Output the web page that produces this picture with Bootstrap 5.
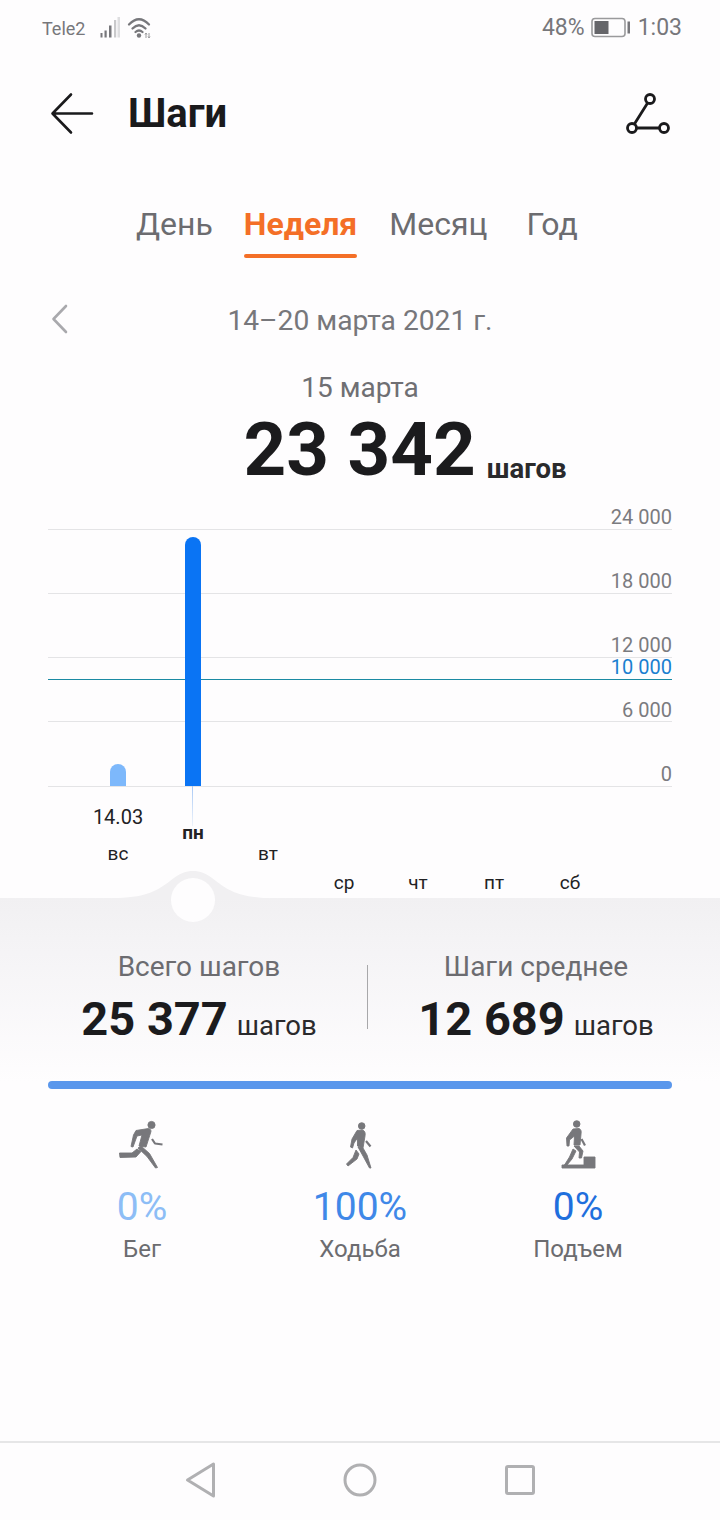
<!DOCTYPE html>
<html lang="ru">
<head>
<meta charset="utf-8">
<title>Шаги</title>
<link href="https://cdn.jsdelivr.net/npm/bootstrap@5.3.0/dist/css/bootstrap.min.css" rel="stylesheet">
<style>
html,body{margin:0;background:#fefdfe;}
body{font-family:Roboto,"Liberation Sans",sans-serif;color:#1c1c1e;}
.screen{width:720px;height:1520px;overflow:hidden;background:#fefdfe;}
.statusbar{height:56px;padding:0 38px 0 42px;color:#77777b;}
.carrier{font-size:18px;margin-right:4px;}
.batt-text{font-size:23px;}
.batt-icon{margin:0 8px 0 5px;}
.titlebar{height:116px;padding:0 48px 0 50px;}
.page-title{font-size:40px;font-weight:700;margin:0 0 0 34px;line-height:1;color:#1a1a1c;}
.tabbar{height:63px;margin-top:36px;padding-left:136px;font-size:32px;color:#6c6c70;}
.tab-item{position:relative;line-height:1;margin-right:31px;}
.tab-item-mid{margin-right:32px;}
.tab-item-wide{margin-right:39px;}
.tab-active{color:#f46f27;font-weight:700;}
.tab-active::after{content:"";position:absolute;left:0;right:0;bottom:-18px;height:4px;border-radius:2px;background:#f46f27;}
.date-row{height:100px;padding:0 48px;position:relative;font-size:28.2px;color:#77777b;}
.date-prev{position:absolute;left:51px;top:33px;}
.day-label{font-size:28px;color:#6f6f73;text-align:center;line-height:1;margin-top:3px;height:24px;}
.big-row{height:102px;padding:15px 0 0 90px;}
.big-num{font-size:74.500px;font-weight:700;line-height:1;color:#1b1b1d;}
.big-unit{font-size:27.500px;font-weight:700;line-height:1;margin:41.500px 0 0 11px;color:#2a2a2c;}
.chart{position:relative;height:398px;}
.gline{position:absolute;left:48px;width:624px;height:1px;background:#e4e4e6;}
.gline-goal{background:#1b8aa3;}
.ylab{position:absolute;right:48px;font-size:20px;line-height:1;color:#7b7b7f;}
.ylab-goal{color:#1a7fd0;}
.bar-col{position:absolute;width:16px;border-radius:8px 8px 0 0;}
.bar-main{left:185px;top:37px;height:249px;background:#0a74f4;}
.bar-off{left:110px;top:264px;height:22px;background:#7db8fb;}
.pointer{position:absolute;left:192px;top:286px;width:1px;height:40px;background:linear-gradient(#a9c9f5,#eef3fb);}
.xlab{position:absolute;font-size:19px;line-height:1;transform:translateX(-50%);color:#222224;}
.xlab-cur{font-weight:700;}
.xdate{font-size:20px;}
.panel{position:relative;height:543px;background:linear-gradient(#f1f0f2 0,#f4f3f5 40px,#fefdfe 185px);}
.wave{position:absolute;left:118px;top:-28px;width:150px;height:29px;}
.knob{position:absolute;left:171px;top:-20px;width:44px;height:44px;border-radius:50%;background:#fefdfe;}
.totals{padding:50px 16px 0 31px;height:183px;}
.total-cell{flex:1 1 0;text-align:center;}
.total-label{font-size:28px;line-height:38px;color:#6c6c70;}
.total-val{font-size:47px;font-weight:700;line-height:56px;margin-top:5px;color:#1b1b1d;}
.total-unit{font-size:27.500px;font-weight:400;margin-left:9px;color:#2a2a2c;}
.vsep{width:1px;height:64px;margin-top:17px;background:#a8a8aa;flex:none;}
.mixbar{height:8px;margin:0 48px;border-radius:4px;background:#5a97ec;}
.mix{padding:0 33px;margin-top:26px;}
.mix-cell{flex:1 1 0;text-align:center;}
.mix-icon{display:block;margin:0 auto;stroke:#77777b;stroke-width:.9;stroke-linejoin:round;}
.mix-pct{font-size:39px;line-height:44px;margin-top:10px;}
.mix-lab{font-size:24px;line-height:30px;color:#6c6c70;margin-top:5px;}
.c1{color:#8dbdf6;}.c2{color:#3f88e8;}.c3{color:#1f6fdd;}
.sysnav{height:79px;padding-bottom:4px;border-top:2px solid #e6e6e7;background:#fefdfe;gap:120px;}
</style>
</head>
<body>
<div class="screen">
  <div class="statusbar d-flex align-items-center justify-content-between">
    <div class="d-flex align-items-center">
      <span class="carrier">Tele2</span>
      <svg width="70" height="35" viewBox="0 0 70 35" aria-hidden="true">
        <g fill="#77777b"><rect x="11.500" y="22" width="2" height="4.500"/><rect x="15.500" y="19.500" width="2.200" height="7"/><rect x="20" y="14.500" width="2.500" height="12"/></g>
        <rect x="25" y="9" width="2.200" height="17.500" fill="#c9c9cb"/><rect x="28.500" y="6" width="2.500" height="20.500" fill="#dedee0"/>
        <g fill="none" stroke="#77777b" stroke-width="2.300" stroke-linecap="round"><path d="M40 13.500Q50 3 60 13.500"/><path d="M43.500 17.500Q50 11 56.500 17.500"/><path d="M46.500 21Q50 18 53.500 21"/></g>
        <circle cx="50" cy="24.500" r="2.200" fill="#77777b"/>
        <path d="M57 22v5M56 23.500l1-1.500 1 1.500M60 22v5M59 25.500l1 1.500 1-1.500" fill="none" stroke="#9a9a9c" stroke-width="1"/>
      </svg>
    </div>
    <div class="d-flex align-items-center batt-text">
      <span>48%</span>
      <svg class="batt-icon" width="40" height="22" viewBox="0 0 40 22" aria-hidden="true">
        <rect x="2" y="1.500" width="33" height="18" rx="3" fill="#fefdfe" stroke="#9a9a9c" stroke-width="1.600"/>
        <rect x="4.500" y="4" width="14" height="13" fill="#66666a"/>
        <rect x="37.500" y="4.500" width="2.500" height="12" fill="#77777b"/>
      </svg>
      <span>1:03</span>
    </div>
  </div>

  <div class="titlebar d-flex align-items-center">
    <svg width="44" height="44" viewBox="0 0 44 44" fill="none" stroke="#1a1a1c" stroke-width="2.600" stroke-linecap="round" stroke-linejoin="round" aria-hidden="true"><path d="M21 2.500 2.500 21.500 21 40.500M3 21.500h39"/></svg>
    <h1 class="page-title">Шаги</h1>
    <svg class="ms-auto" width="46" height="44" viewBox="0 0 46 44" fill="none" stroke="#1a1a1c" stroke-width="2.800" aria-hidden="true"><circle cx="24" cy="7" r="4.500"/><circle cx="6" cy="36" r="4.500"/><circle cx="38" cy="36" r="4.500"/><path d="M21.600 11 8.400 32M10.500 36h23"/></svg>
  </div>

  <div class="tabbar d-flex align-items-start">
    <span class="tab-item">День</span>
    <span class="tab-item tab-item-mid tab-active">Неделя</span>
    <span class="tab-item tab-item-wide">Месяц</span>
    <span class="tab-item">Год</span>
  </div>

  <div class="date-row d-flex align-items-center justify-content-center">
    <svg class="date-prev" width="20" height="30" viewBox="0 0 20 30" fill="none" stroke="#a9a9ad" stroke-width="2.600" stroke-linecap="round" stroke-linejoin="round" aria-hidden="true"><path d="M15 2 2.500 15 15 28"/></svg>
    <span>14–20 марта 2021 г.</span>
  </div>

  <div class="day-label">15 марта</div>
  <div class="big-row d-flex justify-content-center align-items-start">
    <span class="big-num">23 342</span><span class="big-unit">шагов</span>
  </div>

  <div class="chart">
    <div class="gline" style="top:29px"></div>
    <div class="gline" style="top:93px"></div>
    <div class="gline" style="top:157px"></div>
    <div class="gline gline-goal" style="top:179px"></div>
    <div class="gline" style="top:221px"></div>
    <div class="gline" style="top:286px"></div>
    <span class="ylab" style="top:7px">24 000</span>
    <span class="ylab" style="top:71px">18 000</span>
    <span class="ylab" style="top:135px">12 000</span>
    <span class="ylab ylab-goal" style="top:157px">10 000</span>
    <span class="ylab" style="top:200px">6 000</span>
    <span class="ylab" style="top:264px">0</span>
    <div class="bar-col bar-off"></div>
    <div class="bar-col bar-main"></div>
    <div class="pointer"></div>
    <span class="xlab xdate" style="left:118px;top:307px">14.03</span>
    <span class="xlab xlab-cur" style="left:193px;top:323px">пн</span>
    <span class="xlab" style="left:118px;top:344px">вс</span>
    <span class="xlab" style="left:268px;top:344px">вт</span>
    <span class="xlab" style="left:344px;top:373px">ср</span>
    <span class="xlab" style="left:418px;top:373px">чт</span>
    <span class="xlab" style="left:494px;top:373px">пт</span>
    <span class="xlab" style="left:570px;top:373px">сб</span>
  </div>

  <div class="panel">
    <svg class="wave" viewBox="0 0 150 29" aria-hidden="true"><path d="M0 28C30 27 40 20 52 11 62 3 68 1 75 1S88 3 98 11C110 20 120 27 150 28V29H0Z" fill="#f1f0f2"/></svg>
    <div class="knob"></div>
    <div class="totals d-flex align-items-start">
      <div class="total-cell">
        <div class="total-label">Всего шагов</div>
        <div class="total-val">25 377<span class="total-unit">шагов</span></div>
      </div>
      <div class="vsep"></div>
      <div class="total-cell">
        <div class="total-label">Шаги среднее</div>
        <div class="total-val">12 689<span class="total-unit">шагов</span></div>
      </div>
    </div>
    <div class="mixbar"></div>
    <div class="mix d-flex">
      <div class="mix-cell">
        <svg class="mix-icon" width="60" height="60" viewBox="2 0 60 60" fill="#77777b" aria-hidden="true">
          <circle cx="41.500" cy="10" r="3.600"/>
          <path d="M26 15.500 38.500 13.500C41 14 41.500 16 40.500 18L36 32 29 31 32 20 27 21 23 32 21 31.500 23.500 20Z"/>
          <path d="M42 24 45 28.500 52.500 29.500" fill="none" stroke-width="2.200"/>
          <path d="M28 33 31 31 39.500 38.500 47.500 52.500 45.500 53 37 41.500Z"/>
          <path d="M27 34 31 36.500 26 42 10 42.500 9.500 38 22 38Z"/>
        </svg>
        <div class="mix-pct c1">0%</div>
        <div class="mix-lab">Бег</div>
      </div>
      <div class="mix-cell">
        <svg class="mix-icon" width="60" height="60" viewBox="0 0 60 60" fill="#77777b" aria-hidden="true">
          <circle cx="31.700" cy="11" r="3.300"/>
          <path d="M27 15.500 32.500 15C35 16 35.500 18 35 21L33 33 27.500 31 27.500 23 24 28 22.500 33 20.500 32 22 24Z"/>
          <path d="M36 26 40.500 31.500" fill="none" stroke-width="2.200"/>
          <path d="M28 32 33 33 37 40 41 53 39.500 53 33 41Z"/>
          <path d="M26 35 29 39 27 44 18 51 16.500 49 23 42.500Z"/>
        </svg>
        <div class="mix-pct c2">100%</div>
        <div class="mix-lab">Ходьба</div>
      </div>
      <div class="mix-cell">
        <svg class="mix-icon" width="60" height="60" viewBox="-2 0 60 60" fill="#77777b" aria-hidden="true">
          <circle cx="26.700" cy="9" r="3.300"/>
          <path d="M23 14 29 13.500C31 14.500 31.500 16 31 19L30 30 24 30 24.500 21 19.500 25 19 31 17 31 16.500 23Z"/>
          <path d="M31.500 24 35 30.500" fill="none" stroke-width="2.200"/>
          <path d="M24 31 29 31 33 36 31.500 43 29 43 29.500 37Z"/>
          <path d="M23 34 26 36 22 44 17 50 14.500 50 19.500 42Z"/>
          <path d="M12 50H34V42H45V53H12Z"/>
        </svg>
        <div class="mix-pct c3">0%</div>
        <div class="mix-lab">Подъем</div>
      </div>
    </div>
  </div>

  <div class="sysnav d-flex align-items-center justify-content-center">
    <svg width="40" height="40" viewBox="0 0 40 40" fill="none" stroke="#b0b0b2" stroke-width="3" stroke-linejoin="round" aria-hidden="true"><path d="M7.500 20 33.500 4V36Z"/></svg>
    <svg width="40" height="40" viewBox="0 0 40 40" fill="none" stroke="#b0b0b2" stroke-width="3" aria-hidden="true"><circle cx="20" cy="20" r="15"/></svg>
    <svg width="40" height="40" viewBox="0 0 40 40" fill="none" stroke="#b0b0b2" stroke-width="3" stroke-linejoin="round" aria-hidden="true"><rect x="6.500" y="6.500" width="27" height="27" rx="1.500"/></svg>
  </div>
</div>
<script src="https://cdn.jsdelivr.net/npm/bootstrap@5.3.0/dist/js/bootstrap.bundle.min.js"></script>
</body>
</html>
